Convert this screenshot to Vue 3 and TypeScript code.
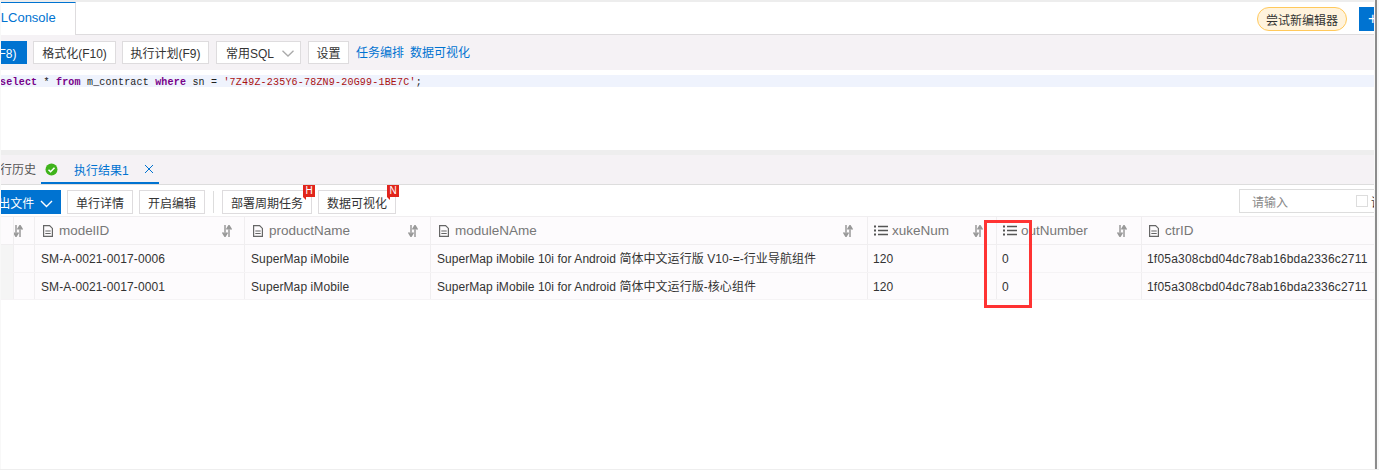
<script setup lang="ts">
interface Column { name: string; icon: 'doc' | 'list'; width: number; sort: boolean }
const columns: Column[] = [
  { name: 'modelID', icon: 'doc', width: 210, sort: true },
  { name: 'productName', icon: 'doc', width: 186, sort: true },
  { name: 'moduleNAme', icon: 'doc', width: 437, sort: true },
  { name: 'xukeNum', icon: 'list', width: 129, sort: true },
  { name: 'outNumber', icon: 'list', width: 145, sort: true },
  { name: 'ctrID', icon: 'doc', width: 233, sort: false },
]
const rows: string[][] = [
  ['SM-A-0021-0017-0006', 'SuperMap iMobile', 'SuperMap iMobile 10i for Android 简体中文运行版 V10-=-行业导航组件', '120', '0', '1f05a308cbd04dc78ab16bda2336c2711'],
  ['SM-A-0021-0017-0001', 'SuperMap iMobile', 'SuperMap iMobile 10i for Android 简体中文运行版-核心组件', '120', '0', '1f05a308cbd04dc78ab16bda2336c2711'],
]
const gridCols = '13px 21px ' + columns.map((c) => c.width + 'px').join(' ')
</script>

<template>
  <div class="page">
    <div class="app">
      <header class="topbar">
        <div class="tab-main">SQLConsole</div>
        <div class="top-right">
          <button class="try-btn">尝试新编辑器</button>
          <button class="plus-btn">+</button>
        </div>
      </header>

      <div class="toolbar">
        <button class="btn primary run">执行(F8)</button>
        <button class="btn w83">格式化(F10)</button>
        <button class="btn w87">执行计划(F9)</button>
        <button class="btn w85">常用SQL
          <svg class="chev" width="12" height="7" viewBox="0 0 12 7"><path d="M.5.700L6 6l5.500-5.300" fill="none" stroke="#aaa" stroke-width="1.300" /></svg>
        </button>
        <button class="btn w41">设置</button>
        <a class="link">任务编排</a>
        <a class="link">数据可视化</a>
      </div>

      <div class="editor">
        <div class="code-line"><code class="code"><b class="kw">select</b> * <b class="kw">from</b> m_contract <b class="kw">where</b> sn = <span class="str">'7Z49Z-235Y6-78ZN9-20G99-1BE7C'</span>;</code></div>
      </div>

      <div class="splitter"></div>

      <div class="result-tabs">
        <span class="hist">执行历史</span>
        <div class="active-tab">
          <svg class="ok" width="13" height="13" viewBox="0 0 13 13"><circle cx="6.5" cy="6.5" r="6" fill="#3fb31b" /><path d="M3.5 6.7l2.1 2.1 3.9-4" fill="none" stroke="#fff" stroke-width="1.5" /></svg>
          <span class="tab-title">执行结果1</span>
          <svg class="close" width="10" height="10" viewBox="0 0 10 10"><path d="M1 1l8 8M9 1l-8 8" stroke="#0073d1" stroke-width="1" fill="none" /></svg>
        </div>
      </div>

      <div class="toolbar2">
        <button class="btn primary export">导出文件
          <svg class="chev-w" width="13" height="8" viewBox="0 0 13 8"><path d="M1 1l5.500 5.500L12 1" fill="none" stroke="#fff" stroke-width="1.4" /></svg>
        </button>
        <button class="btn w66">单行详情</button>
        <button class="btn w66">开启编辑</button>
        <span class="divider"></span>
        <button class="btn w90 badged">部署周期任务<i class="badge">H</i></button>
        <button class="btn w78 badged">数据可视化<i class="badge">N</i></button>
        <div class="search">
          <span class="placeholder">请输入</span>
          <span class="check"></span>
          <span class="check-label">语</span>
        </div>
      </div>

      <div class="table">
        <div class="row head" :style="{ gridTemplateColumns: gridCols }">
          <div class="cell"></div>
          <div class="cell idx">
            <svg class="sort first-sort" width="10" height="12" viewBox="0 0 10 12"><path d="M3 0v11M.6 7.500L3 11.500l2.400-4M7 12V1M4.600 4.500L7 .5l2.400 4" fill="none" stroke="#999" stroke-width="1.500" /></svg>
          </div>
          <div v-for="c in columns" :key="c.name" class="cell hcell">
            <svg v-if="c.icon === 'doc'" class="ico" width="10" height="12" viewBox="0 0 10 12"><path d="M.6.600h6l2.800 2.800v8H.6zM2.300 6h5.400M2.300 8.500h5.400" fill="none" stroke="#666" stroke-width="1.200" /></svg>
            <svg v-else class="ico lst" width="14" height="11" viewBox="0 0 14 11"><path d="M4 1.500h10M4 5.500h10M4 9.500h10" stroke="#555" stroke-width="1.500" fill="none" /><path d="M0 .5h2v2H0zM0 4.500h2v2H0zM0 8.500h2v2H0z" fill="#555" /></svg>
            <span class="hname">{{ c.name }}</span>
            <svg v-if="c.sort" class="sort end" width="10" height="12" viewBox="0 0 10 12"><path d="M3 0v11M.6 7.500L3 11.500l2.400-4M7 12V1M4.600 4.500L7 .5l2.400 4" fill="none" stroke="#999" stroke-width="1.500" /></svg>
          </div>
        </div>
        <div v-for="(r, i) in rows" :key="i" class="row body" :style="{ gridTemplateColumns: gridCols }">
          <div class="cell gutter"></div>
          <div class="cell idx"></div>
          <div v-for="(v, j) in r" :key="j" class="cell dcell">{{ v }}</div>
        </div>
      </div>

      <div class="highlight-box"></div>
    </div>
    <div class="scrollbar"></div>
  </div>
</template>

<style>
html, body { margin: 0; background: #fff; }
</style>

<style scoped>
.page {
  width: 1379px;
  height: 470px;
  box-sizing: border-box;
  display: flex;
  align-items: flex-start;
  background: #f8f8f8;
  border-bottom: 1px solid #eee;
  overflow: hidden;
  font-family: "Liberation Sans", "Noto Sans CJK SC", sans-serif;
  font-size: 12px;
  color: #333;
}
.app {
  position: relative;
  flex: none;
  width: 1373px;
  height: 469px;
  margin: 0 1px;
  padding-top: 2px;
  box-sizing: border-box;
  overflow: hidden;
  background-color: #fff;
  background-image: linear-gradient(#ededed, #ededed);
  background-size: 100% 2px;
  background-repeat: no-repeat;
}
.scrollbar { flex: none; width: 2px; height: 469px; background: #8c8c8c; }
button { font: inherit; color: inherit; cursor: pointer; }

.topbar {
  height: 33px;
  box-sizing: border-box;
  display: flex;
  justify-content: space-between;
  background: #fff;
  border-bottom: 1px solid #dedcde;
}
.tab-main {
  width: 105px;
  margin-left: -30px;
  box-sizing: border-box;
  height: 33px;
  padding-left: 11px;
  line-height: 30px;
  font-size: 13px;
  color: #0073d1;
  background: #fff;
  border-top: 1px solid #0073d1;
  border-right: 1px solid #dedcde;
}
.top-right { display: flex; align-items: flex-start; padding-top: 5px; }
.try-btn {
  width: 90px;
  height: 24px;
  padding: 0;
  border: 1px solid #ffc95c;
  border-radius: 12px;
  background: #fff3dd;
  font-size: 12px;
  color: #333;
}
.plus-btn {
  width: 15px;
  height: 24px;
  margin-left: 12px;
  padding: 0 0 0 9px;
  border: 0;
  background: #0073d1;
  color: #fff;
  font-size: 16px;
  text-align: left;
  overflow: hidden;
}

.toolbar {
  height: 35px;
  box-sizing: border-box;
  padding-top: 6px;
  display: flex;
  align-items: flex-start;
  gap: 6px;
  background: #f5f2f5;
}
.btn {
  height: 23px;
  box-sizing: border-box;
  padding: 0;
  border: 1px solid #dedcde;
  background: #fff;
  white-space: nowrap;
  flex: none;
}
.primary { background: #0073d1; border-color: #0073d1; color: #fff; }
.run { width: 65px; margin-left: -39px; padding-right: 2px; }
.w83 { width: 83px; }
.w87 { width: 87px; margin-right: 1px; }
.w85 { width: 85px; margin-right: 1px; padding-left: 9px; text-align: left; }
.w41 { width: 41px; margin-right: 1px; }
.w66 { width: 66px; }
.w90 { width: 90px; }
.w78 { width: 78px; }
.chev { margin-left: 5px; vertical-align: 1px; }
.link { color: #0073d1; line-height: 25px; }

.editor { height: 80px; box-sizing: border-box; padding-top: 5px; background: #fff; }
.code-line { height: 12px; background: #eff3fd; line-height: 12px; }
.code {
  display: inline-block;
  margin-left: -0.9px;
  font-family: "Liberation Mono", monospace;
  font-size: 10px;
  letter-spacing: 0.2px;
  color: #222;
  white-space: pre;
}
.kw { color: #708; font-weight: 700; }
.str { color: #a11; }

.splitter { height: 5px; background: #eee; }

.result-tabs {
  height: 30px;
  box-sizing: border-box;
  display: flex;
  background: #f5f2f5;
  border-bottom: 1px solid #ddd;
}
.hist {
  margin-left: -13px;
  width: 53px;
  flex: none;
  line-height: 30px;
  white-space: nowrap;
  color: #555;
}
.active-tab {
  width: 118px;
  height: 29px;
  box-sizing: border-box;
  display: flex;
  align-items: center;
  padding: 1px 0 0 4px;
  border-bottom: 2px solid #0073d1;
}
.tab-title { margin-left: 16px; color: #0073d1; }
.close { margin-left: 15px; }

.toolbar2 {
  height: 32px;
  box-sizing: border-box;
  padding-top: 5px;
  display: flex;
  align-items: flex-start;
  gap: 6px;
  background: #fff;
  border-bottom: 1px solid #f0eef0;
}
.toolbar2 .btn { height: 24px; }
.export { width: 79px; margin-left: -19px; padding-right: 4px; }
.chev-w { margin-left: 2px; }
.divider { width: 1px; height: 22px; margin: 1px 2px 0 2px; background: #ddd; }
.badged { position: relative; }
.badge {
  position: absolute;
  right: -4px;
  top: -6px;
  width: 12px;
  height: 12px;
  background: #e1251b;
  color: #fff;
  font-size: 10px;
  font-style: normal;
  line-height: 12px;
  text-align: center;
}
.badge::after {
  content: "";
  position: absolute;
  left: 0;
  top: 12px;
  border-top: 3px solid #e1251b;
  border-left: 3px solid transparent;
}
.search {
  margin-left: auto;
  width: 135px;
  height: 24px;
  box-sizing: border-box;
  margin-top: -1px;
  border: 1px solid #ddd;
  border-right: 0;
  display: flex;
  align-items: center;
  padding-left: 12px;
  overflow: hidden;
  white-space: nowrap;
}
.placeholder { color: #888; width: 104px; flex: none; }
.check { width: 10px; height: 10px; border: 1px solid #ddd; flex: none; }
.check-label { margin-left: 3px; flex: none; }

.table { overflow: hidden; }
.row { display: grid; }
.head { height: 28px; background: #fdfbfd; border-bottom: 1px solid #f0eef0; box-sizing: border-box; }
.body { height: 27.500px; background: #fdfbfd; border-bottom: 1px solid #f5f3f5; box-sizing: border-box; }
.cell { border-right: 1px solid #f0eef0; box-sizing: border-box; min-width: 0; white-space: nowrap; overflow: hidden; }
.gutter { background: #f5f5f5; }
.idx { display: flex; align-items: center; }
.first-sort { flex: none; margin-left: -1px; }
.hcell { display: flex; align-items: center; padding: 0 12px 0 8px; color: #777; font-size: 13.500px; }
.hname { margin-left: 6px; }
.ico { flex: none; }
.lst { margin-left: -2px; }
.lst + .hname { margin-left: 4px; }
.hcell:last-child { padding-left: 7px; }
.end { margin-left: auto; flex: none; }
.hcell:nth-child(5) .end { margin-right: 2px; }
.hcell:nth-child(6) .end { margin-right: 1px; }
.hcell:nth-child(7) .end { margin-right: 2px; }
.dcell { padding-left: 6px; line-height: 29px; color: #333; font-size: 12px; letter-spacing: 0.1px; }
.dcell:nth-child(5) { letter-spacing: 0.05px; }
.dcell:nth-child(6), .dcell:nth-child(7) { padding-left: 5px; }
.dcell:last-child { padding-left: 5px; letter-spacing: 0.2px; }
.highlight-box {
  position: absolute;
  left: 983px;
  top: 220px;
  width: 48px;
  height: 88px;
  box-sizing: border-box;
  border: 3px solid #f33;
}
</style>
